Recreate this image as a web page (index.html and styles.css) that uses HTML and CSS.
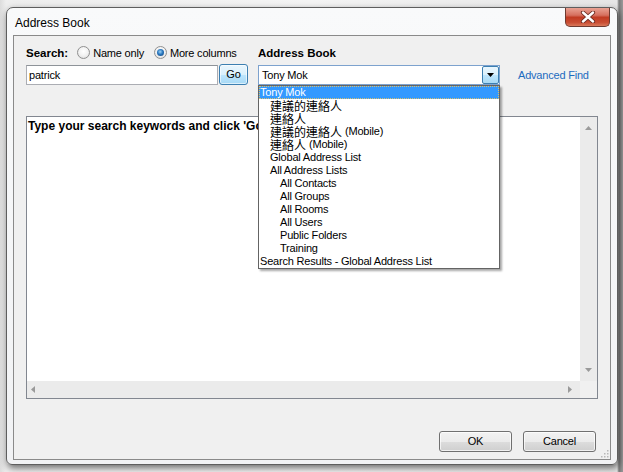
FILE: index.html
```
<!DOCTYPE html>
<html>
<head>
<meta charset="utf-8">
<link rel="stylesheet" href="styles.css">
</head>
<body>
<div class="window">
  <div class="titlebar">
    <span class="title">Address Book</span>
    <div class="close">
      <svg width="16" height="12" viewBox="0 0 16 12"><path d="M3 1.5 L13 10.5 M13 1.5 L3 10.5" stroke="#6b2a20" stroke-width="4.2" stroke-linecap="round"/><path d="M3 1.5 L13 10.5 M13 1.5 L3 10.5" stroke="#ffffff" stroke-width="2.4" stroke-linecap="round"/></svg>
    </div>
  </div>
  <div class="client">
    <div class="controls">
      <div class="search-col">
        <div class="label-row">
          <span class="bold">Search:</span>
          <span class="radio"></span><span class="rlabel">Name only</span>
          <span class="radio checked"></span><span class="rlabel">More columns</span>
        </div>
        <div class="input-row">
          <div class="textbox">patrick</div>
          <div class="gobtn">Go</div>
        </div>
      </div>
      <div class="book-col">
        <div class="label-row"><span class="bold">Address Book</span></div>
        <div class="combo">
          <span class="combo-text">Tony Mok</span>
          <span class="combo-btn"><svg width="7" height="4" viewBox="0 0 7 4"><path d="M0 0 H7 L3.5 4 Z" fill="#000"/></svg></span>
        </div>
        <ul class="dropdown">
          <li class="sel">Tony Mok</li>
          <li class="l1"><span class="cjk">建議的連絡人</span></li>
          <li class="l1"><span class="cjk">連絡人</span></li>
          <li class="l1"><span class="cjk">建議的連絡人</span> (Mobile)</li>
          <li class="l1"><span class="cjk">連絡人</span> (Mobile)</li>
          <li class="l1">Global Address List</li>
          <li class="l1">All Address Lists</li>
          <li class="l2">All Contacts</li>
          <li class="l2">All Groups</li>
          <li class="l2">All Rooms</li>
          <li class="l2">All Users</li>
          <li class="l2">Public Folders</li>
          <li class="l2">Training</li>
          <li>Search Results - Global Address List</li>
        </ul>
      </div>
      <a class="adv">Advanced Find</a>
    </div>
    <div class="results">
      <div class="res-body"><span class="res-head">Type your search keywords and click 'Go'</span></div>
      <div class="vscroll">
        <svg width="7" height="4" viewBox="0 0 7 4"><path d="M0 4 H7 L3.5 0 Z" fill="#9a9a9a"/></svg>
        <svg width="7" height="4" viewBox="0 0 7 4"><path d="M0 0 H7 L3.5 4 Z" fill="#9a9a9a"/></svg>
      </div>
      <div class="hscroll">
        <svg width="4" height="7" viewBox="0 0 4 7"><path d="M4 0 V7 L0 3.5 Z" fill="#9a9a9a"/></svg>
        <svg width="4" height="7" viewBox="0 0 4 7"><path d="M0 0 V7 L4 3.5 Z" fill="#9a9a9a"/></svg>
      </div>
      <div class="corner"></div>
    </div>
    <div class="buttons">
      <div class="btn">OK</div>
      <div class="btn">Cancel</div>
    </div>
    <svg class="grip" width="8" height="8" viewBox="0 0 8 8"><g fill="#b8b8b8"><rect x="6" y="0" width="1.5" height="1.5"/><rect x="3" y="3" width="1.5" height="1.5"/><rect x="6" y="3" width="1.5" height="1.5"/><rect x="0" y="6" width="1.5" height="1.5"/><rect x="3" y="6" width="1.5" height="1.5"/><rect x="6" y="6" width="1.5" height="1.5"/></g></svg>
  </div>
</div>
</body>
</html>
```
FILE: styles.css
```
html, body {
  margin: 0;
  padding: 0;
}
body {
  width: 623px;
  height: 472px;
  overflow: hidden;
  background: linear-gradient(90deg, #dcdcdc 0, #eeeeee 6px, #f4f4f4 50%, #e6e6e6 617px, #7c7c7c 619px, #9a9a9a 623px);
  font-family: "Liberation Sans", Arial, sans-serif;
  font-size: 11px;
  letter-spacing: -0.2px;
  color: #000;
}
.window {
  box-sizing: border-box;
  width: 612px;
  height: 458px;
  margin: 7px 0 0 6px;
  border: 1px solid #5e5e5e;
  border-radius: 7px 7px 6px 6px;
  background: linear-gradient(#f9fafb, #f1f2f4);
  box-shadow: 1px 3px 7px rgba(0,0,0,0.55);
  padding: 0 6px 4px 6px;
  display: flex;
  flex-direction: column;
}
.titlebar {
  height: 27px;
  display: flex;
  align-items: flex-start;
}
.title {
  font-size: 12px;
  letter-spacing: 0;
  margin: 8px 0 0 2px;
}
.close {
  margin-left: auto;
  margin-right: 1px;
  width: 45px;
  height: 19px;
  box-sizing: border-box;
  border: 1px solid #6e3a30;
  border-top: none;
  border-radius: 0 0 5px 5px;
  background: linear-gradient(#e9a293 0%, #d6705f 40%, #c13b23 52%, #c94d33 80%, #d9785a 100%);
  display: flex;
  align-items: center;
  justify-content: center;
}
.client {
  flex: 1;
  position: relative;
  border: 1px solid #8a8a8a;
  background: #f0f0f0;
  padding: 8px 12px 0 12px;
  display: flex;
  flex-direction: column;
}
.bold {
  font-weight: bold;
  font-size: 11.5px;
  letter-spacing: 0;
}
.controls {
  display: flex;
  align-items: flex-end;
}
.label-row {
  height: 17px;
  margin-bottom: 4px;
  display: flex;
  align-items: center;
}
.search-col {
  width: 222px;
}
.radio {
  box-sizing: border-box;
  width: 13px;
  height: 13px;
  border-radius: 50%;
  border: 1px solid #909090;
  background: radial-gradient(circle at 50% 40%, #ffffff 0, #f2f2f2 50%, #d6d6d6 100%);
  margin: 0 3px 0 9px;
  position: relative;
}
.radio.checked::after {
  content: "";
  position: absolute;
  left: 2px;
  top: 2px;
  width: 7px;
  height: 7px;
  border-radius: 50%;
  background: radial-gradient(circle at 45% 40%, #9fd3f5 0, #2a78c0 45%, #0e3c72 100%);
}
.rlabel + .radio { margin-left: 10px; }
.input-row {
  display: flex;
  gap: 1px;
}
.textbox {
  box-sizing: border-box;
  width: 192px;
  height: 20px;
  border: 1px solid #abadb3;
  border-top-color: #8e9399;
  background: #fff;
  padding: 3px 2px;
  line-height: 13px;
}
.gobtn {
  box-sizing: border-box;
  width: 29px;
  height: 21px;
  margin-top: -1px;
  border: 1px solid #3c7fb1;
  border-radius: 3px;
  background: linear-gradient(#eaf6fd 0, #d9f0fc 50%, #bee6fd 51%, #a7d9f5 100%);
  box-shadow: inset 0 0 0 1px rgba(255,255,255,0.6);
  text-align: center;
  line-height: 19px;
}
.book-col {
  width: 242px;
  margin-left: 10px;
  position: relative;
}
.combo {
  box-sizing: border-box;
  height: 20px;
  border: 1px solid #7da2ce;
  background: #fff;
  display: flex;
  align-items: center;
}
.combo-text {
  padding-left: 3px;
  flex: 1;
}
.combo-btn {
  box-sizing: border-box;
  width: 17px;
  height: 18px;
  border: 1px solid #3c7fb1;
  border-radius: 2px;
  background: linear-gradient(#eaf6fd 0, #d9f0fc 50%, #bee6fd 51%, #a7d9f5 100%);
  display: flex;
  align-items: center;
  justify-content: center;
}
.dropdown {
  position: absolute;
  left: 0;
  top: 100%;
  z-index: 2;
  box-sizing: border-box;
  width: 242px;
  margin: 0;
  padding: 0;
  list-style: none;
  background: #fff;
  border: 1px solid #646464;
  box-shadow: 2px 2px 2px rgba(0,0,0,0.35);
}
.dropdown li {
  height: 13px;
  line-height: 13px;
  white-space: nowrap;
  padding-left: 1px;
  display: flex;
  align-items: center;
  gap: 3px;
}
.dropdown li.sel {
  background: #3399ff;
  color: #fff;
  outline: 1px dotted #d8c070;
  outline-offset: -1px;
}
.dropdown li.l1 { padding-left: 11px; }
.dropdown li.l2 { padding-left: 21px; }
.cjk {
  font-family: "Noto Sans CJK TC", "Liberation Sans", sans-serif;
  font-size: 12px;
  line-height: 13px;
  letter-spacing: 0;
}
.adv {
  margin-left: 18px;
  line-height: 20px;
  color: #1c6bbf;
}
.results {
  box-sizing: border-box;
  margin-top: 31px;
  height: 283px;
  border: 1px solid #828790;
  background: #fff;
  display: grid;
  grid-template-columns: 1fr 17px;
  grid-template-rows: 1fr 17px;
}
.res-body {
  padding: 2px 1px;
  line-height: 14px;
  white-space: nowrap;
  overflow: hidden;
}
.res-head {
  font-weight: bold;
  font-size: 12px;
  letter-spacing: 0;
}
.vscroll {
  background: #ebebeb;
  display: flex;
  flex-direction: column;
  justify-content: space-between;
  align-items: center;
  padding: 9px 0 9px;
}
.hscroll {
  background: #ebebeb;
  display: flex;
  justify-content: space-between;
  align-items: center;
  padding: 0 8px 0 4px;
}
.corner {
  background: #f0f0f0;
}
.buttons {
  margin-top: 32px;
  display: flex;
  justify-content: flex-end;
  gap: 11px;
  padding-right: 2px;
}
.btn {
  box-sizing: border-box;
  width: 73px;
  height: 21px;
  border: 1px solid #707070;
  border-radius: 3px;
  background: linear-gradient(#f2f2f2 0, #ebebeb 50%, #dddddd 51%, #cfcfcf 100%);
  box-shadow: inset 0 0 0 1px rgba(255,255,255,0.7);
  text-align: center;
  line-height: 19px;
}
.grip {
  position: absolute;
  right: 1px;
  bottom: 1px;
}
```
